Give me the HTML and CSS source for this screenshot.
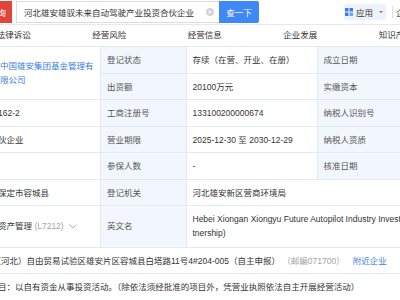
FILE: index.html
```html
<!DOCTYPE html>
<html lang="zh-CN">
<head>
    <meta charset="UTF-8">
    <meta name="viewport" content="width=device-width, initial-scale=1.0">
    <title>企业信息</title>
    <link rel="stylesheet" href="styles.css">
</head>
<body>
    <header class="topbar">
        <button class="query-tag">查询</button>
        <div class="search-box">
            <span class="search-text">河北雄安雄驭未来自动驾驶产业投资合伙企业</span>
            <span class="search-clear">
                <svg width="8" height="8" viewBox="0 0 8 8"><circle cx="4" cy="4" r="4" fill="#d4d4d4"/><path d="M2.6 2.6l2.8 2.8M5.4 2.6l-2.8 2.8" stroke="#fff" stroke-width="0.9"/></svg>
            </span>
        </div>
        <button class="search-btn">查一下</button>
        <div class="tools">
            <span class="apps">
                <svg width="8" height="8" viewBox="0 0 8 8">
                    <rect x="0" y="0" width="3.5" height="3.5" fill="#3c7ee0"/>
                    <rect x="4.5" y="0" width="3.5" height="3.5" fill="#3c7ee0"/>
                    <rect x="0" y="4.5" width="3.5" height="3.5" fill="#3c7ee0"/>
                    <rect x="4.5" y="4.5" width="3.5" height="3.5" fill="#6fa3ee"/>
                </svg>
                应用
                <span class="caret"></span>
            </span>
            <span class="divider"></span>
            <span class="more">企业</span>
        </div>
    </header>

    <nav class="tabs">
        <span class="tab">法律诉讼</span>
        <span class="tab">经营风险</span>
        <span class="tab">经营信息</span>
        <span class="tab">企业发展</span>
        <span class="tab">知识产权</span>
    </nav>

    <table class="info">
        <colgroup>
            <col class="c-val1">
            <col class="c-label">
            <col class="c-val">
            <col class="c-label2">
        </colgroup>
        <tr>
            <td rowspan="2" class="person"><span class="link">中国雄安集团基金管理有限公司</span></td>
            <td class="label">登记状态</td>
            <td>存续（在营、开业、在册）</td>
            <td class="label">成立日期</td>
        </tr>
        <tr>
            <td class="label">出资额</td>
            <td>20100万元</td>
            <td class="label">实缴资本</td>
        </tr>
        <tr>
            <td>162-2</td>
            <td class="label">工商注册号</td>
            <td>133100200000674</td>
            <td class="label">纳税人识别号</td>
        </tr>
        <tr>
            <td>伙企业</td>
            <td class="label">营业期限</td>
            <td>2025-12-30 至 2030-12-29</td>
            <td class="label">纳税人资质</td>
        </tr>
        <tr>
            <td></td>
            <td class="label">参保人数</td>
            <td>-</td>
            <td class="label">核准日期</td>
        </tr>
        <tr>
            <td>保定市容城县</td>
            <td class="label">登记机关</td>
            <td colspan="2">河北雄安新区营商环境局</td>
        </tr>
        <tr class="tall">
            <td>资产管理 <span class="muted">(L7212)</span>
                <svg class="chev" width="8" height="5" viewBox="0 0 8 5"><path d="M0.5 0.5L4 4L7.5 0.5" fill="none" stroke="#a8a8a8" stroke-width="0.9"/></svg>
            </td>
            <td class="label">英文名</td>
            <td colspan="2" class="nowrap">Hebei Xiongan Xiongyu Future Autopilot Industry Investment Partnership (Limited Par<br>tnership)</td>
        </tr>
        <tr>
            <td colspan="4" class="wide addr">（河北）自由贸易试验区雄安片区容城县白塔路11号4#204-005（自主申报） <span class="muted">（邮编071700）</span><span class="link near">附近企业</span></td>
        </tr>
        <tr>
            <td colspan="4" class="wide">目：以自有资金从事投资活动。（除依法须经批准的项目外，凭营业执照依法自主开展经营活动）</td>
        </tr>
    </table>
</body>
</html>
```

FILE: styles.css
```css
:root {
    --text: #333;
    --label-text: #555;
    --muted: #a3a3a3;
    --link: #3a80de;
    --border: #e5eaf1;
    --label-bg: #f2f7fd;
    --brand-red: #e2433a;
    --brand-blue: #3f88f5;
}

body {
    margin: 0;
    width: 400px;
    height: 300px;
    overflow: hidden;
    background: #fff;
    color: var(--text);
    font-family: "Liberation Sans", "Noto Sans CJK SC", sans-serif;
    font-size: 8.5px;
}

button {
    font-family: inherit;
    font-size: inherit;
    border: none;
    margin: 0;
    cursor: pointer;
}

/* top search bar */
.topbar {
    display: flex;
    align-items: center;
    height: 24px;
    border-bottom: 1px solid #e9e9e9;
    white-space: nowrap;
}

.query-tag {
    height: 22px;
    margin-left: -17px;
    padding: 0 6px;
    background: var(--brand-red);
    color: #fff;
    flex-shrink: 0;
}

.search-box {
    display: flex;
    align-items: center;
    justify-content: space-between;
    width: 203px;
    height: 22px;
    margin-left: 4px;
    padding: 0 5px 0 7px;
    box-sizing: border-box;
    border: 1px solid #dcdcdc;
    border-right: none;
    flex-shrink: 0;
}

.search-clear {
    display: flex;
}

.search-btn {
    width: 40px;
    height: 22px;
    background: var(--brand-blue);
    color: #fff;
    border-radius: 0 2px 2px 0;
    flex-shrink: 0;
}

.tools {
    display: flex;
    align-items: center;
    margin-left: 85px;
}

.apps {
    display: flex;
    align-items: center;
    gap: 3px;
    padding: 2px 3px 2px 1px;
    background: #eef3fb;
    border-radius: 2px;
}

.caret {
    width: 0;
    height: 0;
    margin-left: 3px;
    border-left: 2px solid transparent;
    border-right: 2px solid transparent;
    border-top: 2.5px solid #777;
}

.divider {
    width: 1px;
    height: 12px;
    margin: 0 3px 0 6px;
    background: #dedede;
}

/* tabs */
.tabs {
    display: flex;
    height: 21px;
    margin-left: -34px;
    white-space: nowrap;
}

.tab {
    flex: 0 0 95.5px;
    line-height: 21px;
    text-align: center;
}

/* info table */
.info {
    margin-left: -9px;
    width: 426px;
    table-layout: fixed;
    border-collapse: collapse;
}

.c-val1 { width: 109px; }
.c-label { width: 85.5px; }
.c-val { width: 131px; }
.c-label2 { width: 100.5px; }

.info td {
    padding: 6px 6px 5.5px;
    line-height: 14px;
    border: 1px solid var(--border);
    vertical-align: middle;
    white-space: nowrap;
    overflow: hidden;
}

.info td.label {
    background: var(--label-bg);
    color: var(--label-text);
}

.info td.person {
    padding-left: 8px;
    padding-right: 4px;
    white-space: normal;
}

.info tr.tall td {
    padding-top: 6px;
    padding-bottom: 6px;
    line-height: 14.3px;
}

.info td.addr {
    padding-left: 0.5px;
}

.link {
    color: var(--link);
}

.muted {
    color: var(--muted);
}

.near {
    margin-left: 8px;
}

.chev {
    margin-left: 3px;
    vertical-align: middle;
}
```
